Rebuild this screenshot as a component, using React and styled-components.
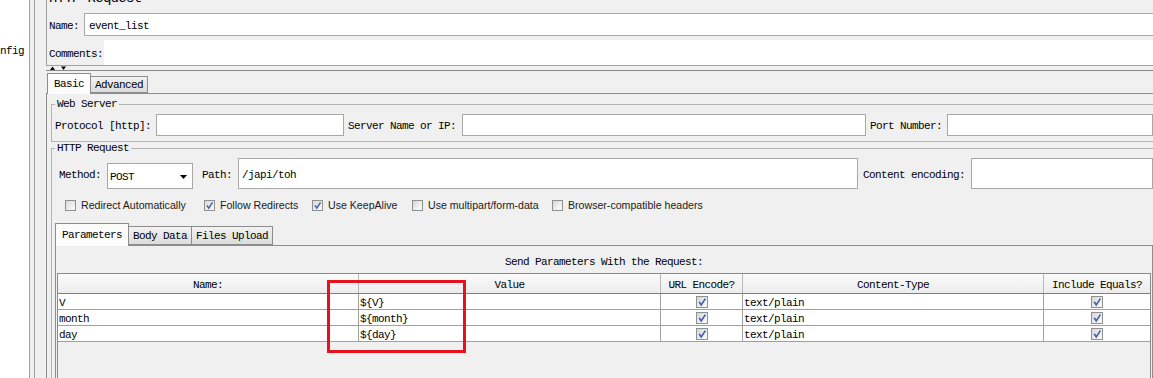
import React from 'react';
import styled, { createGlobalStyle } from 'styled-components';

const mono = `"Liberation Mono", "DejaVu Sans Mono", monospace`;
const sans = `"Liberation Sans", Arial, sans-serif`;

const Global = createGlobalStyle`
  html, body { margin: 0; padding: 0; background: #fff; }
  body {
    width: 1153px; height: 378px; overflow: hidden;
    font-family: ${mono}; font-size: 11px; letter-spacing: -0.6px; color: #000;
  }
  * { box-sizing: border-box; }
`;

const Screen = styled.div`
  position: relative;
  display: flex;
  width: 1153px;
  height: 378px;
  overflow: hidden;
`;

const Tree = styled.div`
  width: 29px;
  flex: none;
  background: #fff;
  padding-top: 45px;
  line-height: 12px;
  white-space: nowrap;
  overflow: hidden;
`;

const Splitter = styled.div`
  width: 6px;
  flex: none;
  background: #f0f0f0;
  border-left: 1px solid #a0a0a0;
  border-right: 1px solid #a0a0a0;
`;

const Main = styled.div`
  flex: 1;
  min-width: 0;
  background: #f0f0f0;
  padding-left: 11px;
  overflow: hidden;
`;

const Inner = styled.div`
  width: 1115px;
  height: 378px;
  display: flex;
  flex-direction: column;
`;

const TitleBox = styled.div`
  border-left: 1px solid #a0a0a0;
  border-bottom: 1px solid #a0a0a0;
  padding-left: 1px;
  flex: none;
`;

const Title = styled.div`
  margin-top: -10px;
  height: 16px;
  font-size: 14px;
  line-height: 16px;
  letter-spacing: -0.7px;
  padding-left: 1px;
  white-space: nowrap;
`;

const FieldRow = styled.div`
  display: flex;
  align-items: center;
  height: ${p => p.$h}px;
  margin-top: ${p => p.$mt}px;
`;

const RowLabel = styled.div`
  width: ${p => p.$w}px;
  flex: none;
  padding: 2px 0 0 1px;
  white-space: nowrap;
`;

const TextBox = styled.div`
  flex: 1;
  height: 100%;
  background: #fff;
  border: 1px solid #a8a8a8;
  padding: 2px 0 0 4px;
  display: flex;
  align-items: center;
  white-space: nowrap;
`;

const WhiteArea = styled.div`
  flex: 1;
  height: 100%;
  background: #fff;
`;

const SplitBar = styled.div`
  height: 5px;
  flex: none;
  border-bottom: 1px solid #8a8a8a;
  padding-left: 4px;
  display: flex;
  align-items: flex-start;
`;

const TabStrip = styled.div`
  display: flex;
  align-items: flex-end;
  height: 22px;
  flex: none;
  padding-left: ${p => p.$pl}px;
`;

const Tab = styled.div`
  position: relative;
  height: ${p => (p.$active ? p.$h + 1 : p.$h - 3)}px;
  margin-bottom: ${p => (p.$active ? -1 : 0)}px;
  z-index: ${p => (p.$active ? 1 : 0)};
  padding: 0 ${p => (p.$active ? 6 : 4)}px;
  border: 1px solid #8d8d8d;
  border-bottom: ${p => (p.$active ? 'none' : '1px solid #8d8d8d')};
  margin-left: ${p => (p.$active ? 0 : -1)}px;
  background: ${p =>
    p.$active ? '#fcfcfc' : 'linear-gradient(#f2f2f2, #dcdcdc)'};
  display: flex;
  align-items: center;
  white-space: nowrap;
  &:first-child { margin-left: 0; }
`;

const TabBody = styled.div`
  flex: 1;
  min-height: 0;
  border: 1px solid #8d8d8d;
  border-bottom: none;
  display: flex;
  flex-direction: column;
  padding: ${p => p.$pad};
`;

const Group = styled.fieldset`
  margin: 0;
  min-width: 0;
  border: 1px solid #b4b4b4;
  border-bottom: ${p => (p.$open ? 'none' : '1px solid #b4b4b4')};
  padding: 4px 2px ${p => (p.$open ? 0 : 5)}px 3px;
  flex: ${p => (p.$open ? 1 : 'none')};
  display: flex;
  flex-direction: column;
`;

const Legend = styled.legend`
  padding: 0 2px;
  line-height: 12px;
  font-size: 11px;
`;

const InputsRow = styled.div`
  display: flex;
  align-items: center;
  height: ${p => p.$h}px;
  padding-left: ${p => p.$pl}px;
`;

const Label = styled.span`
  flex: none;
  white-space: nowrap;
  padding-top: 2px;
  margin-right: ${p => p.$mr}px;
`;

const Input = styled.div`
  height: 100%;
  width: ${p => (p.$w ? `${p.$w}px` : 'auto')};
  flex: ${p => (p.$w ? 'none' : 1)};
  margin-right: ${p => p.$mr || 0}px;
  background: #fff;
  border: 1px solid #a8a8a8;
  display: flex;
  align-items: center;
  padding: 2px 0 0 3px;
  white-space: nowrap;
`;

const Combo = styled.div`
  align-self: flex-end;
  width: 86px;
  height: 26px;
  flex: none;
  margin-right: 9px;
  background: #fff;
  border: 1px solid #a8a8a8;
  display: flex;
  align-items: center;
  justify-content: space-between;
  padding: 2px 5px 0 2px;
`;

const OptionsRow = styled.div`
  display: grid;
  grid-template-columns: 139px 108px 100px 140px auto;
  align-items: center;
  height: 16px;
  margin-top: 8px;
  padding-left: 10px;
  font-family: ${sans};
  letter-spacing: 0;
  font-size: 10.6px;
  color: #1a1a1a;
`;

const Option = styled.label`
  display: flex;
  align-items: center;
  gap: 5px;
  white-space: nowrap;
`;

const BoxShell = styled.span`
  display: inline-flex;
  align-items: center;
  justify-content: center;
  flex: none;
  width: ${p => p.$size}px;
  height: ${p => p.$size}px;
  border: 1px solid #8e8f8f;
  background: linear-gradient(135deg, #d6d6d6 0%, #efefef 60%, #fbfbfb 100%);
`;

const ParamsTabs = styled.div`
  margin-top: 10px;
  flex: 1;
  display: flex;
  flex-direction: column;
  min-height: 0;
`;

const Caption = styled.div`
  margin-top: 10px;
  line-height: 12px;
  text-align: center;
  flex: none;
`;

const ScrollPane = styled.div`
  margin: 5px 1px 0;
  flex: 1;
  border: 1px solid #8a8a8a;
  border-bottom: none;
  background: #f0f0f0;
`;

const GridRow = styled.div`
  display: grid;
  grid-template-columns: 301px 302px 82px 301px 1fr;
  height: ${p => (p.$head ? 20 : 16)}px;
  border-bottom: 1px solid ${p => (p.$head ? '#7f7f7f' : '#a0a0a0')};
  background: ${p => (p.$head ? 'linear-gradient(#fbfbfb, #ececec)' : '#fff')};
`;

const Cell = styled.div`
  border-right: 1px solid ${p => (p.$head ? '#b8b8b8' : '#a0a0a0')};
  display: flex;
  align-items: center;
  justify-content: ${p => (p.$align === 'center' ? 'center' : 'flex-start')};
  padding-left: ${p => (p.$align === 'center' ? 0 : 1)}px;
  padding-top: ${p => (p.$box ? 0 : 2)}px;
  white-space: nowrap;
  overflow: hidden;
  &:last-child { border-right: none; }
`;

const Highlight = styled.div`
  position: absolute;
  left: 327px;
  top: 280px;
  width: 139px;
  height: 73px;
  border: 3px solid #e3121b;
  pointer-events: none;
`;

function CheckBox({ size = 11, checked }) {
  return (
    <BoxShell $size={size}>
      {checked && (
        <svg width={size - 2} height={size - 2} viewBox="0 0 10 10">
          <path d="M2.2 4.8 L4.2 8 L8.4 1.6" fill="none" stroke="#4a62ad" strokeWidth="1.7" />
        </svg>
      )}
    </BoxShell>
  );
}

const options = [
  ['Redirect Automatically', false],
  ['Follow Redirects', true],
  ['Use KeepAlive', true],
  ['Use multipart/form-data', false],
  ['Browser-compatible headers', false],
];

const params = [
  ['V', '${V}'],
  ['month', '${month}'],
  ['day', '${day}'],
];

export default function App() {
  return (
    <>
      <Global />
      <Screen>
        <Tree>nfig</Tree>
        <Splitter />
        <Main>
          <Inner>
            <TitleBox>
              <Title>HTTP Request</Title>
              <FieldRow $h={23} $mt={7}>
                <RowLabel $w={36}>Name:</RowLabel>
                <TextBox>event_list</TextBox>
              </FieldRow>
              <FieldRow $h={25} $mt={4}>
                <RowLabel $w={56}>Comments:</RowLabel>
                <WhiteArea />
              </FieldRow>
            </TitleBox>
            <SplitBar>
              <svg width="18" height="4" viewBox="0 0 18 4">
                <polygon points="0,4 2.5,0.5 5,4" fill="#000" />
                <polygon points="11,0.5 16,0.5 13.5,4" fill="#000" />
              </svg>
            </SplitBar>
            <TabStrip $pl={1}>
              <Tab $active $h={20}>Basic</Tab>
              <Tab $h={20}>Advanced</Tab>
            </TabStrip>
            <TabBody $pad="4px 4px 0">
              <Group>
                <Legend>Web Server</Legend>
                <InputsRow $h={22} $pl={0}>
                  <Label $mr={5}>Protocol [http]:</Label>
                  <Input $w={188} $mr={4} />
                  <Label $mr={6}>Server Name or IP:</Label>
                  <Input $w={404} $mr={4} />
                  <Label $mr={5}>Port Number:</Label>
                  <Input />
                </InputsRow>
              </Group>
              <Group $open>
                <Legend>HTTP Request</Legend>
                <InputsRow $h={31} $pl={4}>
                  <Label $mr={6}>Method:</Label>
                  <Combo>
                    <span>POST</span>
                    <svg width="7" height="4" viewBox="0 0 7 4">
                      <polygon points="0,0 7,0 3.5,4" fill="#000" />
                    </svg>
                  </Combo>
                  <Label $mr={6}>Path:</Label>
                  <Input $w={620} $mr={5}>/japi/toh</Input>
                  <Label $mr={6}>Content encoding:</Label>
                  <Input />
                </InputsRow>
                <OptionsRow>
                  {options.map(([text, on]) => (
                    <Option key={text}>
                      <CheckBox checked={on} />
                      {text}
                    </Option>
                  ))}
                </OptionsRow>
                <ParamsTabs>
                  <TabStrip $pl={0}>
                    <Tab $active $h={22}>Parameters</Tab>
                    <Tab $h={22}>Body Data</Tab>
                    <Tab $h={22}>Files Upload</Tab>
                  </TabStrip>
                  <TabBody $pad="0">
                    <Caption>Send Parameters With the Request:</Caption>
                    <ScrollPane>
                      <GridRow $head>
                        <Cell $head $align="center">Name:</Cell>
                        <Cell $head $align="center">Value</Cell>
                        <Cell $head $align="center">URL Encode?</Cell>
                        <Cell $head $align="center">Content-Type</Cell>
                        <Cell $head $align="center">Include Equals?</Cell>
                      </GridRow>
                      {params.map(([n, v]) => (
                        <GridRow key={n}>
                          <Cell>{n}</Cell>
                          <Cell>{v}</Cell>
                          <Cell $box $align="center"><CheckBox size={12} checked /></Cell>
                          <Cell>text/plain</Cell>
                          <Cell $box $align="center"><CheckBox size={12} checked /></Cell>
                        </GridRow>
                      ))}
                    </ScrollPane>
                  </TabBody>
                </ParamsTabs>
              </Group>
            </TabBody>
          </Inner>
        </Main>
        <Highlight />
      </Screen>
    </>
  );
}
